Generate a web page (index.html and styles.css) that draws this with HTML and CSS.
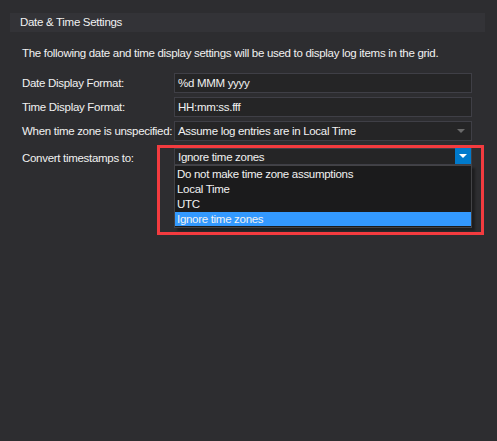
FILE: index.html
```html
<!DOCTYPE html>
<html lang="en">
<head>
  <meta charset="UTF-8">
  <title>Date &amp; Time Settings</title>
  <link rel="stylesheet" href="styles.css">
</head>
<body>
  <div class="panel">
    <div class="section-title">Date &amp; Time Settings</div>

    <p class="intro">The following date and time display settings will be used to display log items in the grid.</p>

    <div class="form">
      <label class="label">Date Display Format:</label>
      <div class="field">%d MMM yyyy</div>

      <label class="label">Time Display Format:</label>
      <div class="field">HH:mm:ss.fff</div>

      <label class="label">When time zone is unspecified:</label>
      <div class="field combo">
        <span>Assume log entries are in Local Time</span>
        <span class="arrow"></span>
      </div>

      <label class="label convert">Convert timestamps to:</label>
      <div class="combo-wrap">
        <div class="field combo open">
          <span>Ignore time zones</span>
          <span class="drop-btn"><span class="arrow white"></span></span>
        </div>
        <ul class="dropdown">
          <li>Do not make time zone assumptions</li>
          <li>Local Time</li>
          <li>UTC</li>
          <li class="selected">Ignore time zones</li>
        </ul>
        <div class="callout"></div>
      </div>
    </div>
  </div>
</body>
</html>
```

FILE: styles.css
```css
html, body {
  height: 100%;
}
body {
  margin: 0;
  background: #2d2d30;
  color: #f1f1f1;
  font-family: "Liberation Sans", Arial, sans-serif;
  font-size: 11.5px;
  letter-spacing: -0.3px;
}
.panel {
  padding: 13px 12px 0 10px;
}
.section-title {
  background: #333337;
  height: 19px;
  line-height: 19px;
  padding-left: 10px;
}
.intro {
  margin: 13px 0 0 12px;
  line-height: 16px;
  white-space: nowrap;
}
.form {
  display: grid;
  grid-template-columns: 152px 298px;
  grid-auto-rows: 20px;
  row-gap: 4px;
  margin: 12px 0 0 12px;
}
.label {
  line-height: 20px;
  white-space: nowrap;
}
.label.convert {
  margin-top: 3px;
}
.field {
  box-sizing: border-box;
  height: 20px;
  background: #252526;
  border: 1px solid #3f3f46;
  padding-left: 3px;
  line-height: 18px;
  display: flex;
  align-items: center;
  justify-content: space-between;
  white-space: nowrap;
}
.combo .arrow {
  width: 0;
  height: 0;
  border-left: 4px solid transparent;
  border-right: 4px solid transparent;
  border-top: 4px solid #6a6a6a;
  margin-right: 6px;
}
.combo-wrap {
  position: relative;
  margin-top: 3px;
}
.combo.open {
  height: 17px;
  padding-right: 0;
}
.drop-btn {
  width: 16px;
  height: 16px;
  background: #007acc;
  display: flex;
  align-items: center;
  justify-content: center;
  margin-top: -1px;
}
.drop-btn .arrow.white {
  border-top-color: #ffffff;
  margin: 0;
}
.dropdown {
  position: absolute;
  top: 17px;
  left: 0;
  width: 298px;
  box-sizing: border-box;
  margin: 0;
  padding: 1px 0;
  list-style: none;
  background: #1b1b1c;
  border: 1px solid #434346;
  box-shadow: 3px 3px 2px rgba(0, 0, 0, 0.35);
}
.dropdown li {
  height: 15px;
  line-height: 15px;
  padding-left: 2px;
}
.dropdown li.selected {
  background: #3399ff;
  height: 14px;
  line-height: 14px;
}
.callout {
  position: absolute;
  left: -17px;
  top: -3px;
  width: 321px;
  height: 84px;
  border: 3px solid #f33b3f;
  pointer-events: none;
}
```
